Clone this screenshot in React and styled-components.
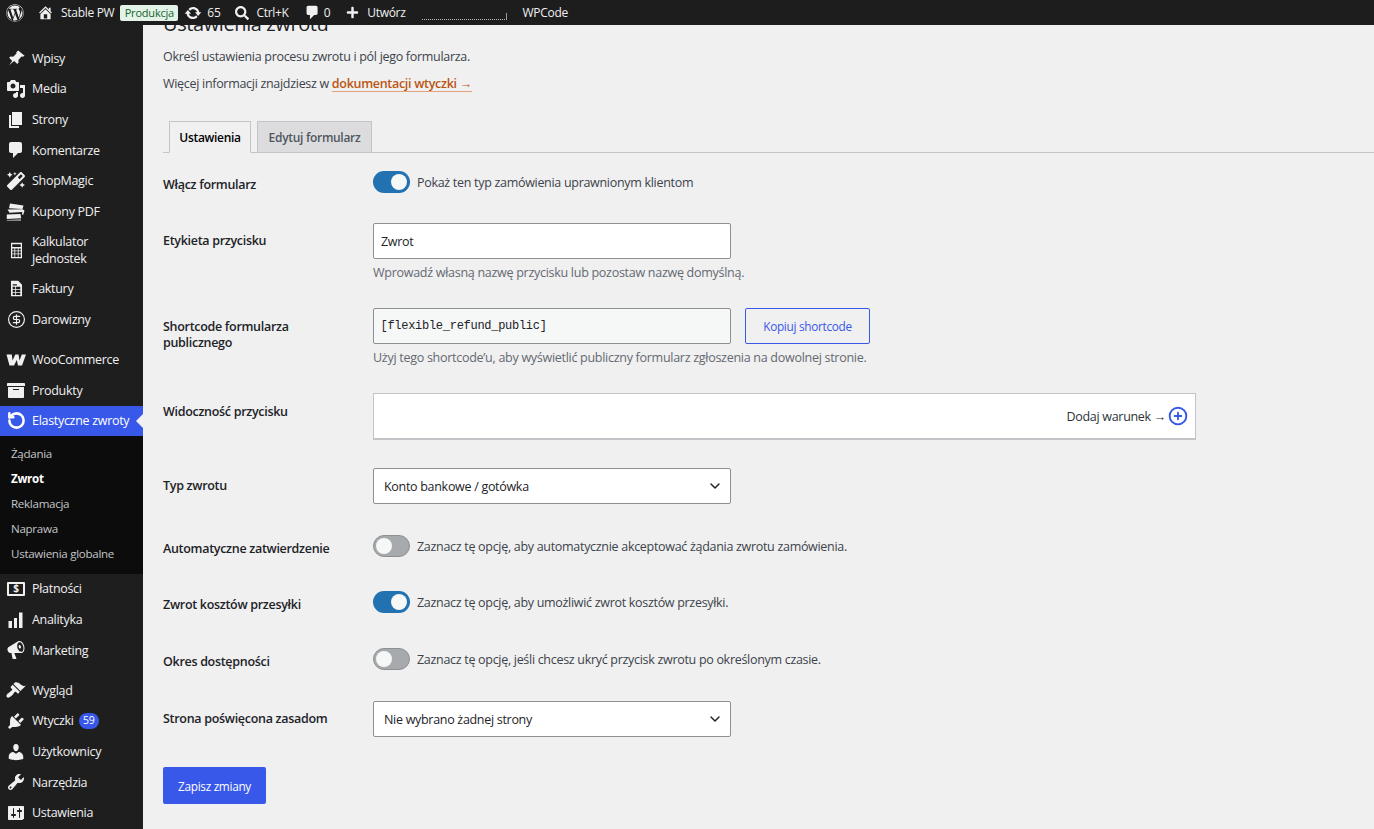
import React from "react";
import styled, { createGlobalStyle } from "styled-components";
import { FaWordpress, FaSearch, FaPlus, FaMagic } from "react-icons/fa";
import { ChevronDown, CirclePlus, CircleDollarSign, RotateCcw } from "lucide-react";

const Global = createGlobalStyle`
  html, body { margin: 0; padding: 0; height: 829px; overflow: hidden; background: #f0f0f1; }
  body { font-family: "Open Sans", "Noto Sans", sans-serif; font-size: 12.5px; letter-spacing: -0.3px; color: #3c434a; }
  * { box-sizing: border-box; }
`;

const D = ({ d, size = 20 }) => (
  <svg width={size} height={size} viewBox="0 0 20 20" fill="currentColor" fillRule="evenodd">
    <path d={d} />
  </svg>
);

const P = {
  home: "M16 8.5l1.53 1.53-1.06 1.06L10 4.62l-6.47 6.47-1.06-1.06L10 2.5l4 4v-2h2v4zm-6-2.46l6 5.99V18H4v-5.97zM12 17v-5H8v5h4z",
  update: "M10.2 3.28c3.53 0 6.43 2.61 6.92 6h2.08l-3.5 4-3.5-4h2.32c-.45-1.97-2.21-3.45-4.32-3.45-1.45 0-2.73.71-3.54 1.78L4.95 5.66C6.23 4.2 8.11 3.28 10.2 3.28zm-.4 13.44c-3.52 0-6.43-2.61-6.92-6H.8l3.5-4c1.17 1.33 2.33 2.67 3.5 4H5.48c.45 1.97 2.21 3.45 4.32 3.45 1.45 0 2.73-.71 3.54-1.78l1.71 1.95c-1.28 1.46-3.15 2.38-5.25 2.38z",
  comment: "M5 2h9c1.1 0 2 .9 2 2v7c0 1.1-.9 2-2 2h-2l-5 5v-5H5c-1.1 0-2-.9-2-2V4c0-1.1.9-2 2-2z",
  pin: "M11.8 1.5l6.7 5.700-1.800 1-1.400-.2-3.300 3.500.2 2.800-1.400 1.400-3.200-3.200-5.600 4.500L1 18.500l4.500-6-3.200-3.200 1.400-1.400 2.800.2 3.500-3.300-.2-1.400z",
  media: "M13 11V4c0-.55-.45-1-1-1h-1.67L9 1H5L3.67 3H2c-.55 0-1 .45-1 1v7c0 .55.45 1 1 1h10c.55 0 1-.45 1-1zM7 4.5c1.38 0 2.5 1.12 2.5 2.5S8.38 9.5 7 9.5 4.5 8.38 4.5 7 5.62 4.5 7 4.5zM14 6h5v10.5c0 1.38-1.12 2.5-2.5 2.5S14 17.88 14 16.5s1.12-2.5 2.5-2.5c.17 0 .34.02.5.05V9h-3V6zm-4 8.05V13h2v3.5c0 1.38-1.12 2.5-2.5 2.5S7 17.88 7 16.5 8.12 14 9.5 14c.17 0 .34.02.5.05z",
  page: "M6 15V2h10v13H6zm-1 1h8v2H3V5h2v11z",
  coupon: "M4 1.500l13.500 2-1 3.500-13.500-.8zM1.500 7.500l15-.2 2 1.200-1.200 4.200-1.300-.3.300-2.400-12.800.8zM.8 12.500l13.700-.6.700 4.400-14.400.7zM.8 18l14.200-.6v1.100H.8z",
  calc: "M3.500 1h13v18h-13zM5 2.500v3.500h10V2.500zM5 7.500V10h2.500V7.500zm3.500 0V10h3V7.500zm4 0V10H15V7.500zM5 11v2.500h2.500V11zm3.500 0v2.500h3V11zm4 0v2.500H15V11zM5 14.500V17.500h2.500v-3zm3.500 0v3h3v-3zm4 0v3H15v-3z",
  sheet: "M3.500 1H12l4.500 4.500V19h-13zM5.500 5v1.500h5V5zm-0 3v2.500h3V8zm4 0v2.500h5V8zm-4 3.500V14h3v-2.500zm4 0V14h5v-2.500zm-4 3.500v2.500h3V15zm4 0v2.500h5V15z",
  woo: "M.5 4.500h5.300l.7 6 2.800-6h3.200l1 6 2.300-6H20l-4 11h-4l-1.200-5.500L8 15.500H3.500z",
  archive: "M19 4v2H1V4c0-.55.45-1 1-1h16c.55 0 1 .45 1 1zM2 7h16v10c0 .55-.45 1-1 1H3c-.55 0-1-.45-1-1V7zm11 3V9H7v1h6z",
  bars: "M2.500 11h3.500v7H2.500zM8 8h3v10H8zM13 2.500h3.500V18H13z",
  mega: "M18.150 5.940c.46 1.620.38 3.220-.02 4.480-.42 1.280-1.260 2.180-2.300 2.480-.16.060-.26.060-.4.060-.06.020-.12.020-.18.020-.06.020-.14.020-.22.020h-6.800l2.220 5.500c.02.140-.06.260-.14.340-.08.100-.24.160-.34.160H6.950c-.1 0-.26-.06-.34-.16-.08-.08-.16-.2-.14-.34l-1-5.500H4.250l-.02-.02c-.5.060-1.080-.18-1.540-.62s-.88-1.080-1.060-1.880c-.24-.8-.2-1.560-.02-2.200.18-.62.58-1.080 1.060-1.300l.02-.02 9-5.400c.1-.06.18-.1.24-.16.06-.04.14-.08.24-.12.16-.08.28-.12.5-.18 1.040-.3 2.240.1 3.220.98s1.840 2.240 2.260 3.860zm-2.580 5.980h-.02c.4-.1.740-.34 1.040-.7.58-.7.860-1.760.860-3.040-.02-.64-.1-1.300-.26-1.960-.34-1.320-1.020-2.480-1.880-3.220-.38-.32-.76-.56-1.140-.68-.38-.1-.76-.1-1.100 0s-.66.34-.98.7c-.28.360-.52.780-.7 1.260-.32.960-.32 2.200 0 3.500.18.640.44 1.260.76 1.800.32.520.68.980 1.080 1.300.4.340.8.580 1.180.68.38.120.760.120 1.160.060zm-.64-5.400c.12.460.12.920 0 1.300-.1.380-.34.660-.64.760-.3.080-.62-.02-.92-.28-.28-.28-.5-.66-.62-1.140-.12-.46-.12-.92 0-1.300s.34-.66.64-.74c.3-.1.620 0 .92.280s.5.680.62 1.120z",
  brush: "M14.480 11.060L7.410 3.990l1.500-1.500c.5-.56 2.300-.47 3.510.32 1.210.8 1.430 1.280 2.910 2.100 1.180.64 2.450 1.260 4.450.85zm-.71.71L6.700 4.700 4.930 6.470c-.39.39-.39 1.020 0 1.410l1.060 1.060c.39.39.39 1.030 0 1.420-.6.6-1.430 1.110-2.210 1.690-.35.26-.7.53-1.010.84C1.430 13.230 0 15.080.6 16.680c.15.4.43.68.83.83 1.600.6 3.450-.83 4.790-2.170.31-.31.58-.66.84-1.010.58-.78 1.090-1.610 1.690-2.210.39-.39 1.030-.39 1.420 0l1.060 1.060c.39.39 1.020.39 1.410 0z",
  plug: "M13.110 4.360L9.870 7.600 8 5.730l3.240-3.240c.35-.34 1.050-.2 1.560.32.52.51.66 1.210.31 1.550zm-8 1.770l.91-1.120 9.010 9.010-1.190.84c-.71.71-2.630 1.160-3.820 1.160H6.140L4.900 17.260c-.59.59-1.540.59-2.120 0-.59-.58-.59-1.530 0-2.120l1.240-1.240v-3.880c0-1.130.4-3.190 1.090-3.890zm7.260 3.970l3.240-3.240c.34-.35 1.040-.21 1.550.31.52.51.66 1.210.31 1.550l-3.240 3.250z",
  user: "M10 9.250c-2.270 0-2.730-3.440-2.730-3.440C7 4.020 7.820 2 9.970 2c2.160 0 2.980 2.020 2.710 3.810 0 0-.41 3.440-2.680 3.440zm0 2.570L12.720 10c2.390 0 4.520 2.330 4.520 4.530v2.490s-3.650 1.130-7.240 1.130c-3.650 0-7.240-1.130-7.240-1.130v-2.490c0-2.250 1.940-4.480 4.470-4.480z",
  tools: "M16.680 9.770c-1.340 1.340-3.300 1.670-4.950.99l-5.410 6.520c-.99.99-2.590.99-3.580 0s-.99-2.590 0-3.570l6.520-5.420c-.68-1.650-.35-3.610.99-4.950 1.280-1.280 3.120-1.620 4.720-1.060l-2.890 2.890 2.820 2.820 2.860-2.870c.53 1.580.18 3.390-1.080 4.650zM3.810 16.210c.4.39 1.040.39 1.430 0 .4-.4.4-1.040 0-1.430-.39-.4-1.030-.4-1.430 0-.39.39-.39 1.030 0 1.430z",
  settings: "M18 16V4c0-.55-.45-1-1-1H3c-.55 0-1 .45-1 1v12c0 .55.45 1 1 1h13c.55 0 1-.45 1-1zM8 11h1c.55 0 1 .45 1 1s-.45 1-1 1H8v1.500c0 .28-.22.5-.5.5s-.5-.22-.5-.5V13H6c-.55 0-1-.45-1-1s.45-1 1-1h1V5.500c0-.28.22-.5.5-.5s.5.22.5.5V11zm5-2h-1c-.55 0-1-.45-1-1s.45-1 1-1h1V5.500c0-.28.22-.5.5-.5s.5.22.5.5V7h1c.55 0 1 .45 1 1s-.45 1-1 1h-1v5.500c0 .28-.22.5-.5.5s-.5-.22-.5-.5V9z",
};

const Shell = styled.div`
  display: flex;
  flex-direction: column;
  height: 829px;
  overflow: hidden;
`;

const AdminBar = styled.header`
  flex: 0 0 25px;
  display: flex;
  align-items: center;
  background: #1d1d1d;
  color: #f0f0f1;
  padding-left: 6px;
  font-size: 12px;
  position: relative;
  z-index: 1;
`;

const BarItem = styled.div`
  display: flex;
  align-items: center;
  gap: ${(p) => p.$gap ?? 7}px;
  margin-left: ${(p) => p.$ml ?? 0}px;
  white-space: nowrap;
  svg { flex: none; }
`;

const EnvBadge = styled.span`
  margin-left: 6px;
  height: 16px;
  width: 58px;
  display: flex;
  align-items: center;
  justify-content: center;
  background: #e4f3e7;
  border-radius: 2px;
  color: #14642c;
  font-size: 11px;
  letter-spacing: -0.2px;
`;

const DottedBox = styled.div`
  width: 85px;
  height: 7px;
  margin: 8px 0 0 16px;
  border-bottom: 1px dotted #bbb;
  border-right: 1px solid #999;
`;

const Body = styled.div`
  flex: 1;
  display: flex;
  min-height: 0;
`;

const Sidebar = styled.nav`
  flex: 0 0 143px;
  background: #1e1e1e;
  color: #f0f0f1;
  padding-top: 18px;
`;

const MenuItem = styled.div`
  position: relative;
  display: flex;
  align-items: center;
  min-height: ${(p) => (p.$tall ? 46.5 : p.$active ? 30 : 30.66)}px;
  margin-top: ${(p) => (p.$sep ? 9.5 : 0)}px;
  background: ${(p) => (p.$active ? "#3858e9" : "transparent")};
  color: ${(p) => (p.$active ? "#fff" : "#f0f0f1")};
  line-height: 17px;
  ${(p) =>
    p.$active &&
    `&::after {
      content: "";
      position: absolute;
      right: 0;
      top: 8px;
      border: 7px solid transparent;
      border-right-color: #f0f0f1;
      border-left-width: 0;
    }`}
`;

const MenuIcon = styled.span`
  flex: 0 0 32px;
  display: flex;
  justify-content: center;
  svg { display: block; }
`;

const MenuLabel = styled.span`
  flex: 1;
  display: flex;
  align-items: center;
  padding-right: 6px;
`;

const Count = styled.span`
  margin-left: 5px;
  min-width: 20px;
  height: 16px;
  border-radius: 8px;
  background: #3858e9;
  color: #fff;
  font-size: 10.5px;
  display: flex;
  align-items: center;
  justify-content: center;
`;

const Submenu = styled.div`
  background: #0c0c0c;
  padding: 5.5px 0 7px 11px;
`;

const SubItem = styled.div`
  height: 25.1px;
  display: flex;
  align-items: center;
  font-size: 11.6px;
  color: ${(p) => (p.$current ? "#fff" : "#c3c4c7")};
  font-weight: ${(p) => (p.$current ? 700 : 400)};
`;

const PayIcon = styled.span`
  width: 18px;
  height: 14px;
  border: 2px solid #f0f0f1;
  border-radius: 1px;
  display: flex;
  align-items: center;
  justify-content: center;
  font-size: 10px;
  font-weight: 700;
`;

const Main = styled.main`
  flex: 1;
  min-width: 0;
  overflow: hidden;
  background: #f0f0f1;
  padding-left: 20px;
`;

const Title = styled.h1`
  margin: -16.5px 0 0;
  font-size: 20px;
  line-height: 29px;
  font-weight: 400;
  color: #1d2327;
  letter-spacing: -0.4px;
`;

const Intro = styled.p`
  margin: ${(p) => p.$mt}px 0 0;
  line-height: 20px;
`;

const DocLink = styled.a`
  font-weight: 600;
  color: #bb5511;
  text-decoration: underline;
  text-decoration-color: #e3a27c;
  text-underline-offset: 3px;
`;

const Tabs = styled.div`
  display: flex;
  gap: 6px;
  margin-top: 27px;
  padding-left: 6px;
  border-bottom: 1px solid #c3c4c7;
  height: 32px;
`;

const Tab = styled.div`
  width: ${(p) => p.$w}px;
  height: ${(p) => (p.$active ? 32 : 31)}px;
  display: flex;
  align-items: center;
  justify-content: center;
  border: 1px solid #c3c4c7;
  border-bottom: ${(p) => (p.$active ? "1px solid #f0f0f1" : "none")};
  background: ${(p) => (p.$active ? "#f0f0f1" : "#dcdcde")};
  color: ${(p) => (p.$active ? "#000" : "#50575e")};
  font-weight: 600;
  font-size: 12px;
`;

const Row = styled.section`
  display: grid;
  grid-template-columns: 210px 1fr;
  margin-top: ${(p) => p.$mt}px;
`;

const FieldLabel = styled.div`
  padding-top: ${(p) => p.$pad ?? 9.5}px;
  line-height: 16px;
  font-weight: 600;
  color: #1d2327;
  width: 175px;
`;

const InlineField = styled.div`
  display: flex;
  align-items: center;
  gap: ${(p) => p.$gap ?? 7}px;
`;

const Toggle = styled.span`
  position: relative;
  flex: none;
  width: 37px;
  height: 22px;
  border-radius: 11px;
  background: ${(p) => (p.$on ? "#2271b1" : "#a7aaad")};
  border: ${(p) => (p.$on ? "none" : "1px solid #8c8f94")};
  &::after {
    content: "";
    position: absolute;
    top: ${(p) => (p.$on ? 3 : 2)}px;
    ${(p) => (p.$on ? "right: 3px;" : "left: 2px;")}
    width: 16px;
    height: 16px;
    border-radius: 50%;
    background: #f6f7f7;
  }
`;

const TextInput = styled.input`
  display: block;
  width: 358px;
  height: 36px;
  padding: 0 ${(p) => (p.$code ? 6.5 : 7)}px;
  border: 1px solid #8c8f94;
  border-radius: 2px;
  background: ${(p) => (p.$code ? "#f6f7f7" : "#fff")};
  color: #1d2327;
  font: ${(p) => (p.$code ? `12px "Liberation Mono", monospace` : `12.5px "Open Sans", sans-serif`)};
  letter-spacing: ${(p) => (p.$code ? "-0.28px" : "-0.3px")};
  outline: none;
`;

const Hint = styled.div`
  margin-top: 5px;
  line-height: 18px;
  font-size: 12.55px;
  color: #646970;
`;

const CopyButton = styled.button`
  margin-left: 14px;
  width: 125px;
  height: 36px;
  border: 1px solid #3858e9;
  border-radius: 2px;
  background: transparent;
  color: #3858e9;
  font: 11.8px "Open Sans", sans-serif;
  letter-spacing: -0.3px;
`;

const ConditionBox = styled.div`
  width: 823px;
  height: 47px;
  background: #fff;
  border: 1px solid #c3c4c7;
  border-bottom-width: 2px;
  display: flex;
  align-items: center;
  justify-content: flex-end;
  gap: 2px;
  padding-right: 7px;
  color: #2c3338;
`;

const SelectBox = styled.div`
  width: 358px;
  height: 36px;
  padding: 0 7px 0 10px;
  display: flex;
  align-items: center;
  justify-content: space-between;
  background: #fff;
  border: 1px solid #8c8f94;
  border-radius: 2px;
  color: #1d2327;
`;

const SaveButton = styled.button`
  display: block;
  margin-top: 30px;
  width: 103px;
  height: 37px;
  border: none;
  border-radius: 2px;
  background: #3858e9;
  color: #fff;
  font: 11.8px "Open Sans", sans-serif;
  letter-spacing: -0.3px;
`;

const menuTop = [
  { label: "Wpisy", icon: <D d={P.pin} size={19} /> },
  { label: "Media", icon: <D d={P.media} /> },
  { label: "Strony", icon: <D d={P.page} /> },
  { label: "Komentarze", icon: <D d={P.comment} /> },
  { label: "ShopMagic", icon: <FaMagic size={18} /> },
  { label: "Kupony PDF", icon: <D d={P.coupon} /> },
  { label: "Kalkulator Jednostek", icon: <D d={P.calc} size={17} />, tall: true },
  { label: "Faktury", icon: <D d={P.sheet} size={17} /> },
  { label: "Darowizny", icon: <CircleDollarSign size={19} strokeWidth={1.5} /> },
  { label: "WooCommerce", icon: <D d={P.woo} size={20} />, sep: true },
  { label: "Produkty", icon: <D d={P.archive} /> },
];

const menuBottom = [
  { label: "Płatności", icon: <PayIcon>$</PayIcon> },
  { label: "Analityka", icon: <D d={P.bars} /> },
  { label: "Marketing", icon: <D d={P.mega} /> },
  { label: "Wygląd", icon: <D d={P.brush} />, sep: true },
  { label: "Wtyczki", icon: <D d={P.plug} />, count: 59 },
  { label: "Użytkownicy", icon: <D d={P.user} /> },
  { label: "Narzędzia", icon: <D d={P.tools} /> },
  { label: "Ustawienia", icon: <D d={P.settings} /> },
];

const subItems = ["Żądania", "Zwrot", "Reklamacja", "Naprawa", "Ustawienia globalne"];

const Item = ({ item, active }) => (
  <MenuItem $sep={item.sep} $tall={item.tall} $active={active}>
    <MenuIcon>{item.icon}</MenuIcon>
    <MenuLabel>
      {item.label}
      {item.count ? <Count>{item.count}</Count> : null}
    </MenuLabel>
  </MenuItem>
);

const ToggleRow = ({ mt, label, on, text }) => (
  <Row $mt={mt}>
    <FieldLabel $pad={6}>{label}</FieldLabel>
    <InlineField>
      <Toggle $on={on} />
      <span>{text}</span>
    </InlineField>
  </Row>
);

const SelectRow = ({ mt, label, value }) => (
  <Row $mt={mt}>
    <FieldLabel>{label}</FieldLabel>
    <SelectBox>
      {value}
      <ChevronDown size={16} strokeWidth={2.2} />
    </SelectBox>
  </Row>
);

export default function App() {
  return (
    <Shell>
      <Global />
      <AdminBar>
        <BarItem><FaWordpress size={18} /></BarItem>
        <BarItem $ml={13}><D d={P.home} size={17} />Stable PW</BarItem>
        <EnvBadge>Produkcja</EnvBadge>
        <BarItem $ml={6} $gap={5}><D d={P.update} size={18} />65</BarItem>
        <BarItem $ml={15}><FaSearch size={14} />Ctrl+K</BarItem>
        <BarItem $ml={15} $gap={3}><D d={P.comment} size={17} />0</BarItem>
        <BarItem $ml={16} $gap={8}><FaPlus size={13} />Utwórz</BarItem>
        <DottedBox />
        <BarItem $ml={16}>WPCode</BarItem>
      </AdminBar>
      <Body>
        <Sidebar>
          {menuTop.map((m) => <Item key={m.label} item={m} />)}
          <Item item={{ label: "Elastyczne zwroty", icon: <RotateCcw size={19} strokeWidth={3.2} /> }} active />
          <Submenu>
            {subItems.map((s) => <SubItem key={s} $current={s === "Zwrot"}>{s}</SubItem>)}
          </Submenu>
          {menuBottom.map((m) => <Item key={m.label} item={m} />)}
        </Sidebar>
        <Main>
          <Title>Ustawienia zwrotu</Title>
          <Intro $mt={9.5}>Określ ustawienia procesu zwrotu i pól jego formularza.</Intro>
          <Intro $mt={7}>Więcej informacji znajdziesz w <DocLink>dokumentacji wtyczki →</DocLink></Intro>
          <Tabs>
            <Tab $active $w={82}>Ustawienia</Tab>
            <Tab $w={115}>Edytuj formularz</Tab>
          </Tabs>
          <ToggleRow mt={18} label="Włącz formularz" on text="Pokaż ten typ zamówienia uprawnionym klientom" />
          <Row $mt={30}>
            <FieldLabel>Etykieta przycisku</FieldLabel>
            <div>
              <TextInput defaultValue="Zwrot" />
              <Hint>Wprowadź własną nazwę przycisku lub pozostaw nazwę domyślną.</Hint>
            </div>
          </Row>
          <Row $mt={26}>
            <FieldLabel $pad={10.5}>Shortcode formularza publicznego</FieldLabel>
            <div>
              <InlineField $gap={0}>
                <TextInput $code readOnly defaultValue="[flexible_refund_public]" />
                <CopyButton>Kopiuj shortcode</CopyButton>
              </InlineField>
              <Hint>Użyj tego shortcode’u, aby wyświetlić publiczny formularz zgłoszenia na dowolnej stronie.</Hint>
            </div>
          </Row>
          <Row $mt={26}>
            <FieldLabel $pad={10.5}>Widoczność przycisku</FieldLabel>
            <ConditionBox>
              Dodaj warunek →
              <CirclePlus size={20} color="#3858e9" strokeWidth={2.3} />
            </ConditionBox>
          </Row>
          <SelectRow mt={28} label="Typ zwrotu" value="Konto bankowe / gotówka" />
          <ToggleRow mt={31} label="Automatyczne zatwierdzenie" text="Zaznacz tę opcję, aby automatycznie akceptować żądania zwrotu zamówienia." />
          <ToggleRow mt={34} label="Zwrot kosztów przesyłki" on text="Zaznacz tę opcję, aby umożliwić zwrot kosztów przesyłki." />
          <ToggleRow mt={35} label="Okres dostępności" text="Zaznacz tę opcję, jeśli chcesz ukryć przycisk zwrotu po określonym czasie." />
          <SelectRow mt={31} label="Strona poświęcona zasadom" value="Nie wybrano żadnej strony" />
          <SaveButton>Zapisz zmiany</SaveButton>
        </Main>
      </Body>
    </Shell>
  );
}
